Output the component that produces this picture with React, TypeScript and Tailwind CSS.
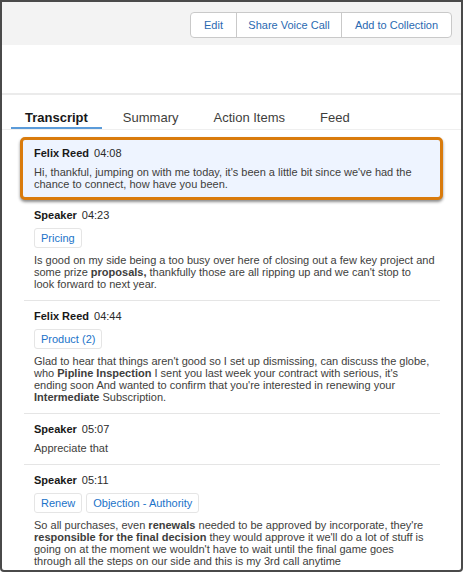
const font = { fontFamily: '"Liberation Sans", Arial, sans-serif' };

type Entry = {
    speaker: string;
    time: string;
    tags?: string[];
    body: React.ReactNode;
};

const entries: Entry[] = [
    {
        speaker: "Speaker",
        time: "04:23",
        tags: ["Pricing"],
        body: (
            <>
                <span className="whitespace-nowrap">
                    Is good on my side being a too busy over here of closing out a few key project and
                </span>
                <br />
                some prize <b>proposals,</b> thankfully those are all ripping up and we can't stop to
                <br />
                look forward to next year.
            </>
        ),
    },
    {
        speaker: "Felix Reed",
        time: "04:44",
        tags: ["Product (2)"],
        body: (
            <>
                Glad to hear that things aren't good so I set up dismissing, can discuss the globe, who{" "}
                <b>Pipline Inspection</b> I sent you last week your contract with serious, it's ending soon And wanted to
                confirm that you're interested in renewing your <b>Intermediate</b> Subscription.
            </>
        ),
    },
    {
        speaker: "Speaker",
        time: "05:07",
        body: <>Appreciate that</>,
    },
    {
        speaker: "Speaker",
        time: "05:11",
        tags: ["Renew", "Objection - Authority"],
        body: (
            <>
                So all purchases, even <b>renewals</b> needed to be approved by incorporate, they're{" "}
                <b>responsible for the final decision</b> they would approve it we'll do a lot of stuff is going on at the
                moment we wouldn't have to wait until the final game goes through all the steps on our side and this is my
                3rd call anytime
            </>
        ),
    },
];

function EntryHeader({ speaker, time }: { speaker: string; time: string }) {
    return (
        <div className="flex items-center gap-[5px] text-[11px] leading-[14px] text-[#181818]">
            <span className="font-bold">{speaker}</span>
            <span className="text-[#2b2b2b]">{time}</span>
        </div>
    );
}

function Tag({ label }: { label: string }) {
    return (
        <span className="flex h-[20px] items-center rounded-[3px] border border-[#e5e5e5] bg-white px-[6px] text-[11px] text-[#1b73c9]">
            {label}
        </span>
    );
}

function TranscriptEntry({ entry, last }: { entry: Entry; last: boolean }) {
    return (
        <div className={`flex flex-col pb-[10px] pl-[10px] pr-[8px] pt-[8px] ${last ? "" : "border-b border-[#e5e5e5]"}`}>
            <EntryHeader speaker={entry.speaker} time={entry.time} />
            {entry.tags && (
                <div className="mt-[6px] flex gap-[4px]">
                    {entry.tags.map((t) => (
                        <Tag key={t} label={t} />
                    ))}
                </div>
            )}
            <p className="mt-[6px] text-[11px] leading-[12px] text-[#3e3e3c]">{entry.body}</p>
        </div>
    );
}

export default function App() {
    const tabs = ["Transcript", "Summary", "Action Items", "Feed"];
    return (
        <div style={font} className="h-[572px] w-[463px] overflow-hidden rounded-b-[4px] border-2 border-[#4a4a4a] bg-white">
            {/* action bar */}
            <div className="flex h-[43px] justify-end bg-[#f3f3f3] pr-[9px] pt-[10px]">
                <div className="flex h-[26px] overflow-hidden rounded-[4px] border border-[#c9c9c9] bg-white text-[11px] text-[#2a69b1]">
                    <button className="w-[45px]">Edit</button>
                    <button className="w-[105px] border-l border-[#c9c9c9]">Share Voice Call</button>
                    <button className="w-[110px] border-l border-[#c9c9c9]">Add to Collection</button>
                </div>
            </div>
            <div className="h-[48px]" />
            <div className="h-[2px] bg-[#ebebeb]" />

            {/* tabs */}
            <div className="flex gap-[7px] border-b border-[#efefef] pl-[9px] pt-[15px]">
                {tabs.map((t, i) => (
                    <div
                        key={t}
                        className={`border-b-2 px-[14px] pb-[1px] text-[13px] leading-[16px] ${
                            i === 0 ? "border-[#5b9bd9] font-bold text-[#181818]" : "border-transparent text-[#3e3e3c]"
                        }`}
                    >
                        {t}
                    </div>
                ))}
            </div>

            {/* highlighted line */}
            <div className="px-[18px] pt-[7px]">
                <div className="rounded-[5px] border-[3px] border-[#d97b0c] bg-[#eef4ff] pb-[7px] pl-[11px] pr-[10px] pt-[6px] shadow-[0_2px_3px_rgba(0,0,0,0.45)]">
                    <EntryHeader speaker="Felix Reed" time="04:08" />
                    <p className="mt-[6px] text-[11px] leading-[12px] text-[#3e3e3c]">
                        Hi, thankful, jumping on with me today, it's been a little bit since we've had the chance to connect,
                        how have you been.
                    </p>
                </div>
            </div>

            <div className="flex flex-col pl-[22px] pr-[21px]">
                {entries.map((e, i) => (
                    <TranscriptEntry key={i} entry={e} last={i === entries.length - 1} />
                ))}
            </div>
        </div>
    );
}
